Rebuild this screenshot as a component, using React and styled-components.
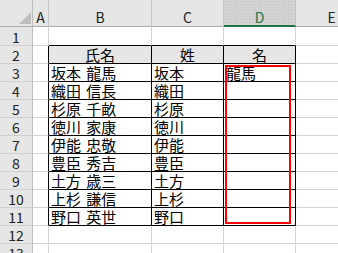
import React from 'react';
import styled, { createGlobalStyle } from 'styled-components';

const Global = createGlobalStyle`
  html, body { margin: 0; padding: 0; background: #fff; overflow: hidden; }
  #root { width: 338px; height: 253px; overflow: hidden; }
`;

const Sheet = styled.div`
  position: relative;
  width: 338px;
  height: 253px;
  overflow: hidden;
  display: grid;
  grid-template-columns: 33px 16px 103px 72px 72px 72px;
  grid-template-rows: 27px 19px repeat(12, 18px);
  font-family: "Noto Sans CJK JP", "Noto Sans", sans-serif;
  color: #000;
`;

const Corner = styled.div`
  box-sizing: border-box;
  background: #e6e6e6;
  border-right: 1px solid #bfbfbf;
  border-bottom: 1px solid #ababab;
  display: flex;
  align-items: flex-end;
  justify-content: flex-end;
  padding: 0 1px 2px 0;
`;

const Triangle = styled.div`
  width: 0;
  height: 0;
  border-left: 12px solid transparent;
  border-bottom: 12px solid #bdbdbd;
`;

const ColHead = styled.div`
  box-sizing: border-box;
  background-color: ${p => (p.$selected ? '#d2d2d2' : '#e6e6e6')};
  background-image: ${p =>
    p.$selected ? 'radial-gradient(circle, #c4c4c4 0.6px, transparent 0.9px)' : 'none'};
  background-size: 3px 3px;
  border-right: 1px solid #c6c6c6;
  border-bottom: ${p => (p.$selected ? '2px solid #217346' : '1px solid #ababab')};
  display: flex;
  align-items: flex-end;
  justify-content: center;
  font-size: 14px;
  line-height: 14px;
  padding-bottom: ${p => (p.$selected ? '1px' : '2px')};
  color: ${p => (p.$selected ? '#217346' : '#222')};
`;

const RowHead = styled.div`
  box-sizing: border-box;
  background: #e6e6e6;
  border-right: 1px solid #bfbfbf;
  border-bottom: 1px solid #d0d0d0;
  display: flex;
  align-items: center;
  justify-content: center;
  font-size: 14px;
  line-height: 16px;
  color: #222;
  padding-top: 1px;
`;

const Cell = styled.div`
  box-sizing: border-box;
  border-right: 1px solid ${p => (p.$rb ? '#000' : '#d4d4d4')};
  border-bottom: 1px solid ${p => (p.$bb ? '#000' : '#d4d4d4')};
  background: ${p => (p.$fill ? '#e7e6e6' : '#fff')};
  display: flex;
  align-items: center;
  justify-content: ${p => (p.$center ? 'center' : 'flex-start')};
  padding: 1px 2px 0;
  font-size: 15px;
  line-height: 16px;
  word-spacing: 2px;
  white-space: nowrap;
`;

const Marker = styled.div`
  position: absolute;
  left: 225px;
  top: 65px;
  width: 66px;
  height: 159px;
  box-sizing: border-box;
  border: 2px solid #ff0000;
  pointer-events: none;
`;

const cols = ['A', 'B', 'C', 'D', 'E'];

const people = [
  ['坂本 龍馬', '坂本', '龍馬'],
  ['織田 信長', '織田', ''],
  ['杉原 千畝', '杉原', ''],
  ['徳川 家康', '徳川', ''],
  ['伊能 忠敬', '伊能', ''],
  ['豊臣 秀吉', '豊臣', ''],
  ['土方 歳三', '土方', ''],
  ['上杉 謙信', '上杉', ''],
  ['野口 英世', '野口', ''],
];

const header = ['氏名', '姓', '名'];

export default function App() {
  const rows = [];
  for (let r = 1; r <= 13; r++) {
    const inTable = r >= 2 && r <= 11;
    let values = ['', '', ''];
    if (r === 2) values = header;
    else if (r >= 3 && r <= 11) values = people[r - 3];
    rows.push(
      <React.Fragment key={r}>
        <RowHead>{r}</RowHead>
        <Cell $rb={inTable} />
        {values.map((v, i) => (
          <Cell
            key={i}
            $rb={inTable}
            $bb={inTable || r === 1}
            $fill={r === 2}
            $center={r === 2}
          >
            {v}
          </Cell>
        ))}
        <Cell />
      </React.Fragment>
    );
  }
  return (
    <>
      <Global />
      <Sheet>
        <Corner>
          <Triangle />
        </Corner>
        {cols.map(c => (
          <ColHead key={c} $selected={c === 'D'}>
            {c}
          </ColHead>
        ))}
        {rows}
        <Marker />
      </Sheet>
    </>
  );
}
